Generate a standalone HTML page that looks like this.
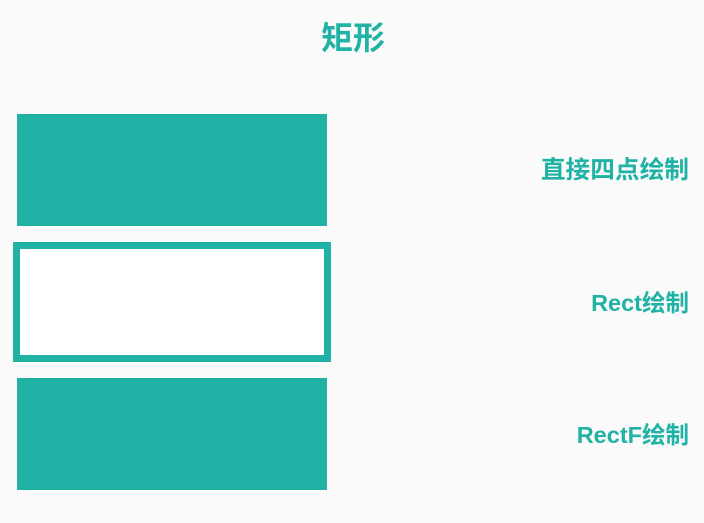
<!DOCTYPE html>
<html><head><meta charset="utf-8"><style>
html,body{margin:0;padding:0;background:#fafafa;width:704px;height:523px;overflow:hidden;position:relative;font-family:"Liberation Sans","Noto Sans CJK SC",sans-serif;}
.t{position:absolute;color:#20b2a4;font-weight:bold;white-space:nowrap;line-height:1;}
.r{position:absolute;box-sizing:border-box;}
</style></head><body>
<div class="t" style="left:321px;top:22px;font-size:32px;">矩形</div>
<div class="r" style="left:17px;top:114px;width:310px;height:112px;background:#20b2a4;"></div>
<div class="r" style="left:13px;top:242px;width:318px;height:120px;border:7px solid #20b2a4;background:#fff;"></div>
<div class="r" style="left:17px;top:378px;width:310px;height:112px;background:#20b2a4;"></div>
<div class="t" style="right:15px;top:159px;font-size:24.7px;">直接四点绘制</div>
<div class="t" style="right:15px;top:292px;font-size:23.5px;">Rect绘制</div>
<div class="t" style="right:15px;top:424px;font-size:23.5px;">RectF绘制</div>
</body></html>
